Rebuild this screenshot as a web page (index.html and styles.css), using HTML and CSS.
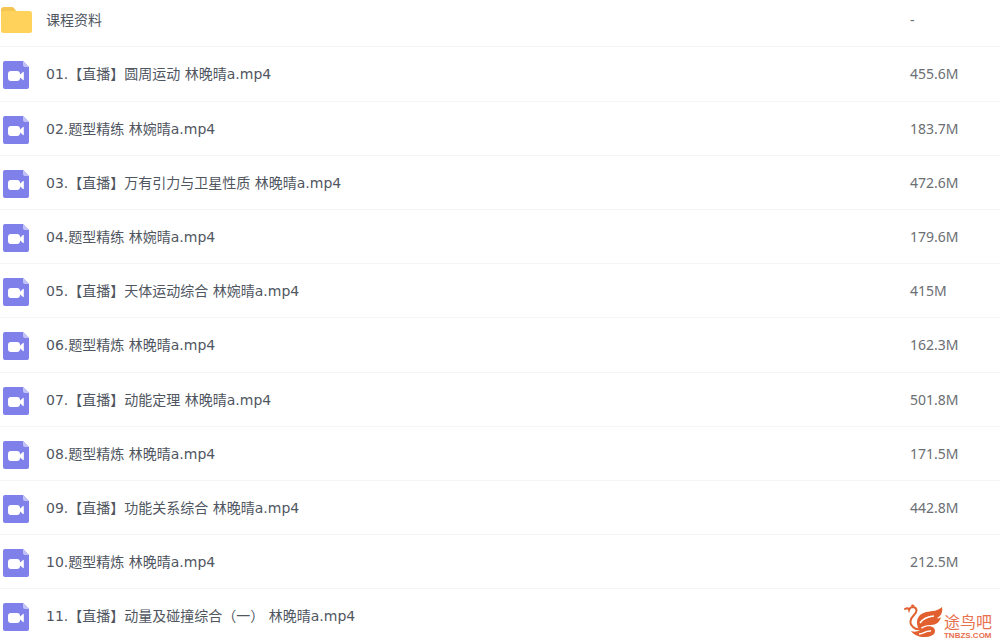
FILE: index.html
```
<!DOCTYPE html>
<html lang="zh-CN">
<head>
	<meta charset="UTF-8">
	<title>课程资料</title>
	<link rel="stylesheet" href="styles.css">
</head>
<body>
<svg class="sprite" aria-hidden="true">
	<symbol id="folder" viewBox="0 0 32 28">
		<path fill="#f5c552" d="M1 4Q1 1 4 1h8q1.500 0 2.500 1.500L16 5v6H1z"/>
		<rect x="1" y="5" width="31" height="22" rx="2.500" fill="#ffd35b"/>
	</symbol>
	<symbol id="video" viewBox="0 -1 32 32">
		<path fill="#7f80ea" d="M5 2h18l6 6v20q0 2-2 2H5q-2 0-2-2V4q0-2 2-2z"/>
		<path fill="#c3c3fa" d="M23 2l6 6h-4q-2 0-2-2z"/>
		<rect x="8" y="12" width="12" height="10" rx="3" fill="#fff"/>
		<path fill="#fff" d="M19 16.500l4-3.500q.8-.5.8.5v7q0 1-.8.500l-4-3.500z"/>
	</symbol>
</svg>
<table class="files">
	<tbody>
		<tr><td class="icon"><svg class="folder"><use href="#folder"/></svg></td><td class="name">课程资料</td><td class="size">-</td></tr>
		<tr><td class="icon"><svg><use href="#video"/></svg></td><td class="name">01.【直播】圆周运动 林晚晴a.mp4</td><td class="size">455.6M</td></tr>
		<tr><td class="icon"><svg><use href="#video"/></svg></td><td class="name">02.题型精练 林婉晴a.mp4</td><td class="size">183.7M</td></tr>
		<tr><td class="icon"><svg><use href="#video"/></svg></td><td class="name">03.【直播】万有引力与卫星性质 林晚晴a.mp4</td><td class="size">472.6M</td></tr>
		<tr><td class="icon"><svg><use href="#video"/></svg></td><td class="name">04.题型精练 林婉晴a.mp4</td><td class="size">179.6M</td></tr>
		<tr><td class="icon"><svg><use href="#video"/></svg></td><td class="name">05.【直播】天体运动综合 林婉晴a.mp4</td><td class="size">415M</td></tr>
		<tr><td class="icon"><svg><use href="#video"/></svg></td><td class="name">06.题型精炼 林晚晴a.mp4</td><td class="size">162.3M</td></tr>
		<tr><td class="icon"><svg><use href="#video"/></svg></td><td class="name">07.【直播】动能定理 林晚晴a.mp4</td><td class="size">501.8M</td></tr>
		<tr><td class="icon"><svg><use href="#video"/></svg></td><td class="name">08.题型精炼 林晚晴a.mp4</td><td class="size">171.5M</td></tr>
		<tr><td class="icon"><svg><use href="#video"/></svg></td><td class="name">09.【直播】功能关系综合 林晚晴a.mp4</td><td class="size">442.8M</td></tr>
		<tr><td class="icon"><svg><use href="#video"/></svg></td><td class="name">10.题型精炼 林晚晴a.mp4</td><td class="size">212.5M</td></tr>
		<tr><td class="icon"><svg><use href="#video"/></svg></td><td class="name">11.【直播】动量及碰撞综合（一） 林晚晴a.mp4</td><td class="size"></td></tr>
	</tbody>
</table>
<div class="watermark">
	<svg viewBox="0 0 40 34" aria-hidden="true">
		<!-- head and neck -->
		<path fill="none" stroke="#e2602f" stroke-width="2" stroke-linecap="round" d="M1 5Q4 3 5 6q1-3 4-3c5 1 4 5 1 8-4 4-5 9-1 12q3 3 8 2"/>
		<path fill="#e2602f" d="M7 2q0-2 2-1.500l2 1.500z"/>
		<!-- wing -->
		<path fill="#e2602f" d="M14 24C11 15 15 10 22 8c7-1 12-1 16-5 1 5-1 9-5 11 1 1 3 0 4-1-1 5-5 8-10 8-5 0-9 1-11 4z"/>
		<path fill="none" stroke="#fff" stroke-width="1.500" d="M16 19q4-6 14-7"/>
		<!-- tail -->
		<path fill="#e2602f" d="M7 27c6 2 9-1 12-3 5-3 12-2 12 3 0 4-5 6-11 6-5 0-10-2-13-6z"/>
		<path fill="none" stroke="#fff" stroke-width="1.500" d="M15 30c5 0 7-4 12-3"/>
	</svg>
	<div class="brand">
		<span class="brand-name">途鸟吧</span>
		<span class="brand-url">TNBZS.COM</span>
	</div>
</div>
</body>
</html>
```
FILE: styles.css
```
body{margin:0;background:#fff;color:#50565f;font:14px/20px "DejaVu Sans","Noto Sans CJK SC",sans-serif;overflow:hidden;}
.sprite{position:absolute;width:0;height:0;}
.files{width:100%;table-layout:fixed;border-collapse:separate;border-spacing:0;}
.files td{box-sizing:border-box;height:54px;padding:0;border-bottom:1px solid #f4f5f7;vertical-align:middle;}
.files tr:first-child td{height:47px;padding-bottom:6px;}
.files tr:nth-child(5n+2) td{height:55px;}
.files tr:last-child td{height:54px;border-bottom:0;}
.files .icon{width:46px;}
.files .size{width:90px;color:#6b6e73;font-family:"Noto Sans",sans-serif;}
.icon svg{display:block;width:32px;height:32px;}
.icon .folder{height:28px;}
.watermark{position:absolute;right:8px;top:604px;display:flex;}
.watermark svg{width:40px;height:34px;}
.brand{display:flex;flex-direction:column;padding-top:6px;color:#e8704e;}
.brand-name{font:16px/22px "Noto Sans CJK SC",sans-serif;}
.brand-url{font:bold 8px/8px "Liberation Sans",sans-serif;}
```
